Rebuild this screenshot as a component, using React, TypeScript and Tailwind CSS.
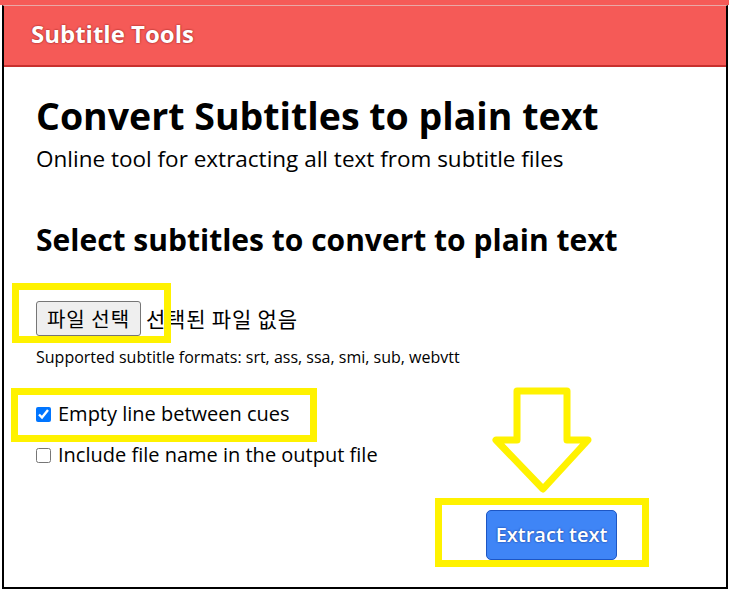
import React from "react";

const sans = { fontFamily: '"Open Sans", "Noto Sans CJK KR", sans-serif' };
const kr = { fontFamily: '"Noto Sans CJK KR", sans-serif' };

export default function App() {
  return (
    <div className="w-[731px] h-[596px] bg-white relative overflow-hidden" style={sans}>
      <div className="h-[5px] w-[729px] bg-[#f55a57]" />
      <div className="ml-[2px] w-[726px] h-[584px] border-x-2 border-b-2 border-black border-t border-t-[#e9a8a6] flex flex-col">
        <div className="h-[61px] shrink-0 bg-[#f55a57] border-b-2 border-[#c8302e] flex items-center pl-[27px] pb-[3px]">
          <span className="text-white font-bold text-[24px] leading-[32px] [text-shadow:0_0_2px_#7a1010]">Subtitle Tools</span>
        </div>
        <div className="pl-[32px] pt-[25px] flex flex-col text-black">
          <h1 className="font-bold text-[37.5px] leading-[48px]">Convert Subtitles to plain text</h1>
          <p className="text-[22.5px] leading-[30px] mt-[4px]">Online tool for extracting all text from subtitle files</p>
          <h2 className="font-bold text-[30px] leading-[40px] mt-[46px]">Select subtitles to convert to plain text</h2>
          <div className="flex items-center mt-[41px] gap-[5px] h-[35px]">
            <div className="relative">
              <div className="h-[35px] w-[105px] flex items-center justify-center bg-[#efefef] border border-[#767676] rounded-[3px] text-[20px] tracking-[1px]" style={kr}>
                파일 선택
              </div>
              <div className="absolute left-[-24px] top-[-18px] w-[159px] h-[60px] border-[7px] border-[#fff200]" />
            </div>
            <span className="text-[21px] tracking-[0.8px]" style={kr}>선택된 파일 없음</span>
          </div>
          <p className="text-[16px] leading-[22px] mt-[10px]">Supported subtitle formats: srt, ass, ssa, smi, sub, webvtt</p>
          <div className="relative flex items-center gap-[7px] mt-[33px] h-[26px]">
            <input type="checkbox" defaultChecked className="w-[15px] h-[15px] m-0 accent-[#0075ff]" />
            <span className="text-[20px]">Empty line between cues</span>
            <div className="absolute left-[-25px] top-[-13px] w-[306px] h-[54px] border-[7px] border-[#fff200]" />
          </div>
          <div className="flex items-center gap-[7px] mt-[15px] h-[26px]">
            <input type="checkbox" className="w-[15px] h-[15px] m-0" />
            <span className="text-[20px]">Include file name in the output file</span>
          </div>
          <div className="flex justify-start pl-[450px] mt-[42px]">
            <div className="relative">
              <button className="w-[131px] h-[50px] rounded-[5px] bg-[#3f85f6] border border-[#1d56c4] text-white font-semibold text-[20px] [text-shadow:0_0_2px_#0a2a80]">
                Extract text
              </button>
              <div className="absolute left-[-51px] top-[-12px] w-[214px] h-[69px] border-[7px] border-[#fff200]" />
              <svg className="absolute left-[0px] top-[-125px]" width="110" height="110" viewBox="0 0 110 110">
                <polygon points="31,6 81,6 81,55 102,55 57,104 10,55 31,55" fill="white" stroke="#fff200" strokeWidth="7" strokeLinejoin="round" />
              </svg>
            </div>
          </div>
        </div>
      </div>
    </div>
  );
}
